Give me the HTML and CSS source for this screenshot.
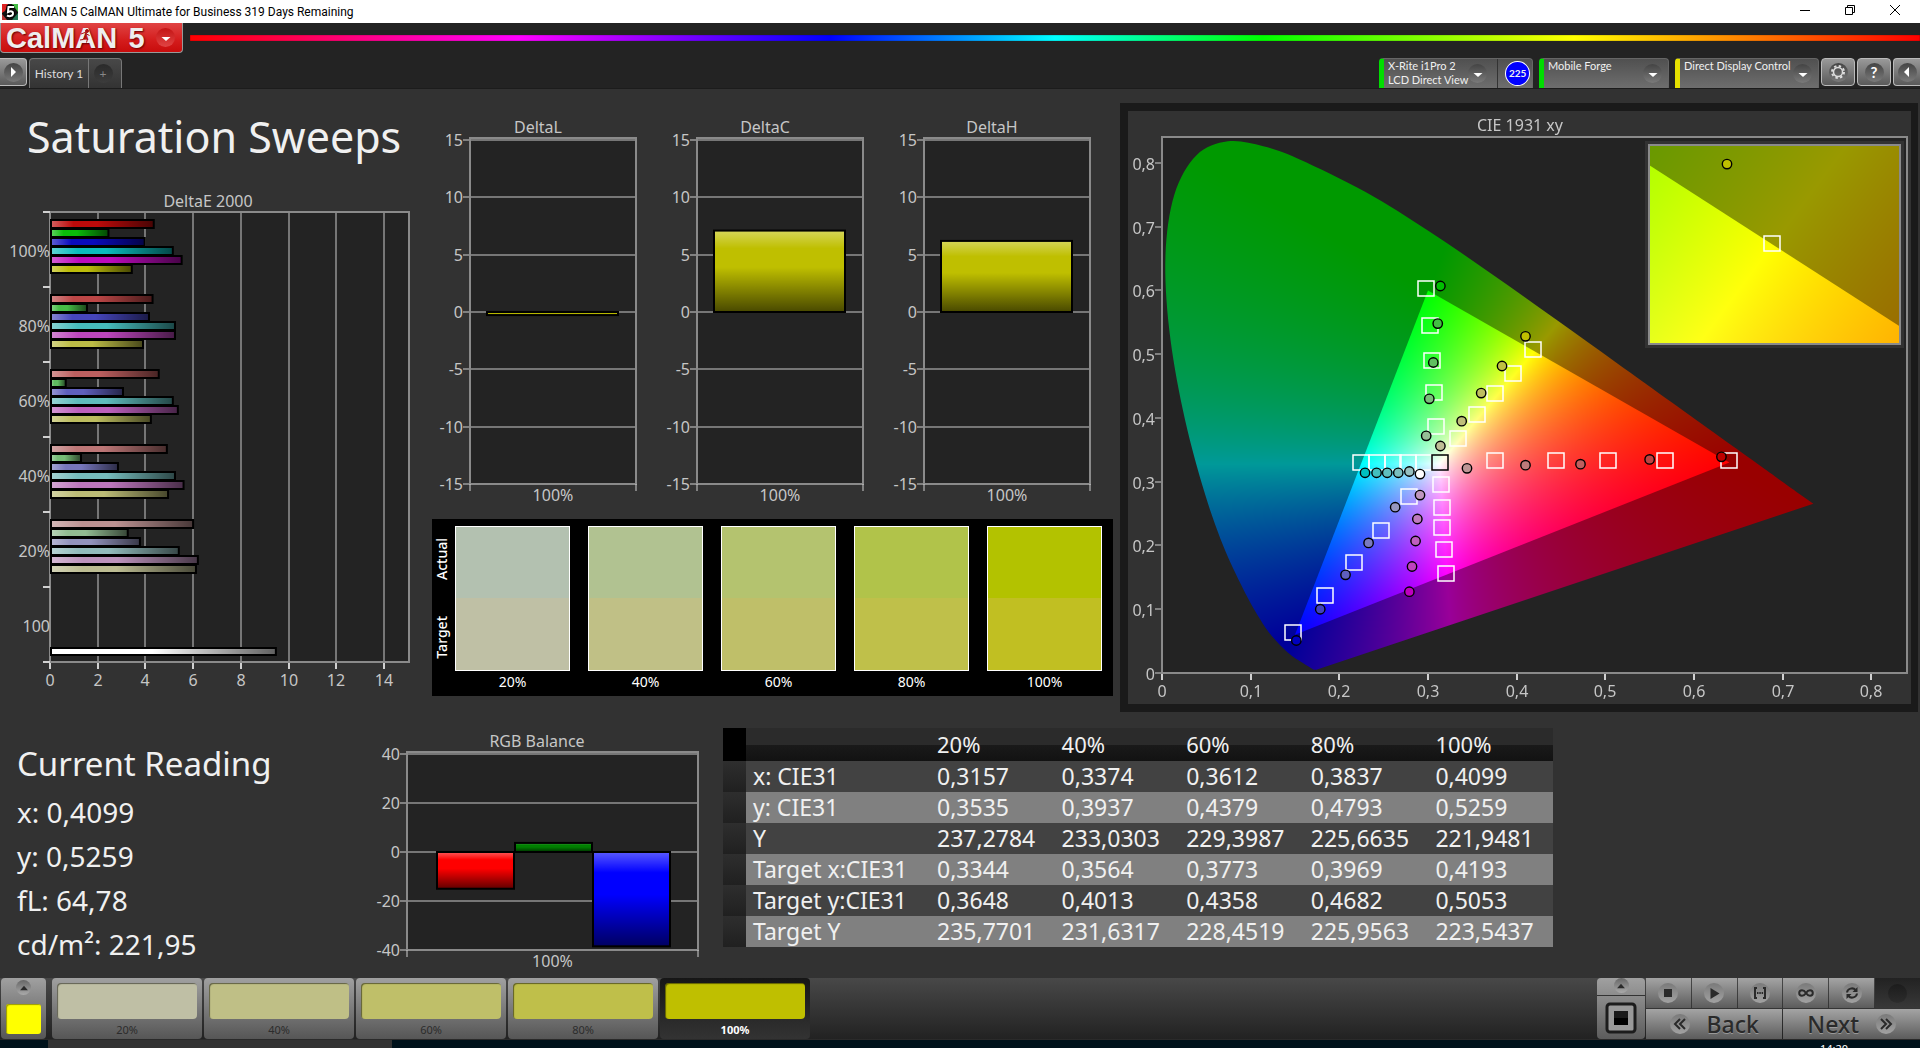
FILE: index.html
```
<!DOCTYPE html>
<html lang="en">
<head>
<meta charset="utf-8">
<title>CalMAN 5 CalMAN Ultimate for Business 319 Days Remaining</title>
<link rel="stylesheet" href="styles.css">
</head>
<body>

<div class="titlebar">
  <svg class="app-icon" viewBox="0 0 16 16" aria-hidden="true">
    <rect width="16" height="16" fill="#111"/>
    <path d="M0 0h6L3 7 0 9z" fill="#d22"/><path d="M10 0h6v8z" fill="#4b4"/><path d="M0 10l5 6H0z" fill="#b33"/><path d="M16 9v7h-6z" fill="#275"/>
    <path d="M12 3H6.500L6 8c3-1.500 5.500-.5 5 2s-4 2.500-6 1.500" fill="none" stroke="#000" stroke-width="4"/>
    <path d="M12 3H6.500L6 8c3-1.500 5.500-.5 5 2s-4 2.500-6 1.500" fill="none" stroke="#fff" stroke-width="2"/>
  </svg>
  <span class="caption">CalMAN 5 CalMAN Ultimate for Business 319 Days Remaining</span>
  <button class="win-btn" aria-label="Minimize"><svg viewBox="0 0 12 12"><path d="M1 6.500h10"/></svg></button>
  <button class="win-btn" aria-label="Restore"><svg viewBox="0 0 12 12"><path d="M1.500 3.500h7v7h-7zM3.500 3V1.500h7v7H9"/></svg></button>
  <button class="win-btn" aria-label="Close"><svg viewBox="0 0 12 12"><path d="M1 1l10 10M11 1L1 11"/></svg></button>
</div>

<header class="brandbar">
  <button class="logo" aria-label="CalMAN 5 menu">
    <span class="logo-name">CalM<span class="logo-a">A<svg viewBox="0 0 14 14"><circle cx="9" cy="2" r="1.500"/><path d="M3 5l4-1.500 1.500 1L7 8l2.500 2-1 3.500M7 8l-2 2.500-3 .5M8.500 5l3 1.500"/></svg></span>N</span>
    <span class="logo-five">5</span>
    <span class="knob red"><svg viewBox="0 0 18 18"><path d="M4.500 8h9l-4.500 4z"/></svg></span>
  </button>
  <div class="rainbow"></div>
</header>

<nav class="tabbar">
  <button class="gray-btn side-btn" aria-label="Show panel"><span class="knob"><svg viewBox="0 0 18 18"><path d="M7 4v10l5-5z"/></svg></span></button>
  <div class="tabs">
    <button class="tab">History 1</button>
    <button class="tab add" aria-label="Add tab"><span class="knob dark">+</span></button>
  </div>
  <div class="devices">
    <div class="device meter green">
      <button class="device-name"><span>X-Rite i1Pro 2<br>LCD Direct View</span><span class="knob"><svg viewBox="0 0 18 18"><path d="M4.500 8h9l-4.500 4z"/></svg></span></button>
      <span class="meter-count">225</span>
    </div>
    <div class="device source green">
      <button class="device-name"><span>Mobile Forge</span><span class="knob"><svg viewBox="0 0 18 18"><path d="M4.500 8h9l-4.500 4z"/></svg></span></button>
    </div>
    <div class="device display yellow">
      <button class="device-name"><span>Direct Display Control</span><span class="knob"><svg viewBox="0 0 18 18"><path d="M4.500 8h9l-4.500 4z"/></svg></span></button>
    </div>
  </div>
  <button class="gray-btn" aria-label="Settings"><span class="knob"><svg viewBox="0 0 18 18"><circle cx="9" cy="9" r="4.500" fill="none" stroke="#ddd" stroke-width="1.500"/><circle cx="9" cy="9" r="6" fill="none" stroke="#ddd" stroke-width="2" stroke-dasharray="2.400 2.312"/></svg></span></button>
  <button class="gray-btn" aria-label="Help"><span class="knob help">?</span></button>
  <button class="gray-btn end-btn" aria-label="Hide panel"><span class="knob"><svg viewBox="0 0 18 18"><path d="M11 4v10L6 9z"/></svg></span></button>
</nav>

<main class="workspace">
  <div class="upper">
    <section class="sweep">
      <h1>Saturation Sweeps</h1>
      <svg id="deltaE" class="chart" viewBox="0 0 432 520"></svg>
    </section>

    <section class="deltas">
      <div class="delta-charts">
        <svg id="deltaL" class="chart" viewBox="0 0 227 400"></svg>
        <svg id="deltaC" class="chart" viewBox="0 0 227 400"></svg>
        <svg id="deltaH" class="chart" viewBox="0 0 227 400"></svg>
      </div>
      <div class="compare">
        <div class="compare-side"><span>Actual</span><span>Target</span></div>
        <figure><div class="patch p20"></div><figcaption>20%</figcaption></figure>
        <figure><div class="patch p40"></div><figcaption>40%</figcaption></figure>
        <figure><div class="patch p60"></div><figcaption>60%</figcaption></figure>
        <figure><div class="patch p80"></div><figcaption>80%</figcaption></figure>
        <figure><div class="patch p100"></div><figcaption>100%</figcaption></figure>
      </div>
    </section>

    <section class="cie">
      <canvas id="cieFill" width="783" height="593"></canvas>
      <svg id="ciePlot" class="chart" viewBox="0 0 783 593"></svg>
    </section>
  </div>

  <div class="lower">
    <section class="reading">
      <h2>Current Reading</h2>
      <p>x: 0,4099</p>
      <p>y: 0,5259</p>
      <p>fL: 64,78</p>
      <p>cd/m²: 221,95</p>
    </section>

    <section class="balance">
      <svg id="rgb" class="chart" viewBox="0 0 340 245"></svg>
    </section>

    <table class="data">
      <thead>
        <tr><th class="grip"></th><th class="name"></th><th>20%</th><th>40%</th><th>60%</th><th>80%</th><th>100%</th></tr>
      </thead>
      <tbody>
        <tr><td class="grip"></td><th>x: CIE31</th><td>0,3157</td><td>0,3374</td><td>0,3612</td><td>0,3837</td><td>0,4099</td></tr>
        <tr><td class="grip"></td><th>y: CIE31</th><td>0,3535</td><td>0,3937</td><td>0,4379</td><td>0,4793</td><td>0,5259</td></tr>
        <tr><td class="grip"></td><th>Y</th><td>237,2784</td><td>233,0303</td><td>229,3987</td><td>225,6635</td><td>221,9481</td></tr>
        <tr><td class="grip"></td><th>Target x:CIE31</th><td>0,3344</td><td>0,3564</td><td>0,3773</td><td>0,3969</td><td>0,4193</td></tr>
        <tr><td class="grip"></td><th>Target y:CIE31</th><td>0,3648</td><td>0,4013</td><td>0,4358</td><td>0,4682</td><td>0,5053</td></tr>
        <tr><td class="grip"></td><th>Target Y</th><td>235,7701</td><td>231,6317</td><td>228,4519</td><td>225,9563</td><td>223,5437</td></tr>
      </tbody>
    </table>
  </div>
</main>

<footer class="controls">
  <button class="current" aria-label="Current color">
    <span class="knob small"><svg viewBox="0 0 18 18"><path d="M4 12h10L9 6z"/></svg></span>
    <span class="current-color"></span>
  </button>
  <div class="levels">
    <button class="level"><span class="chip c20"></span>20%</button>
    <button class="level"><span class="chip c40"></span>40%</button>
    <button class="level"><span class="chip c60"></span>60%</button>
    <button class="level"><span class="chip c80"></span>80%</button>
    <button class="level active"><span class="chip c100"></span>100%</button>
  </div>
  <div class="pattern">
    <button class="pattern-up" aria-label="Expand"><span class="knob small"><svg viewBox="0 0 18 18"><path d="M4 12h10L9 6z"/></svg></span></button>
    <button class="pattern-window" aria-label="Window pattern"><svg viewBox="0 0 32 32"><rect x="2" y="2" width="28" height="28" rx="3" fill="#999" stroke="#1c1c1c" stroke-width="3"/><rect x="9" y="9" width="14" height="7" fill="#1a1a1a"/><rect x="9" y="16" width="14" height="7" fill="#000"/></svg></button>
  </div>
  <div class="transport">
    <button class="key" aria-label="Stop"><span class="knob light"><svg viewBox="0 0 20 20"><path d="M6 6h8v8H6z"/></svg></span></button>
    <button class="key" aria-label="Read"><span class="knob light"><svg viewBox="0 0 20 20"><path d="M6.500 5v11l9-5.500z"/></svg></span></button>
    <button class="key" aria-label="Read series"><span class="knob light"><svg viewBox="0 0 20 20"><path class="line" d="M7 5H5v10h2M13 5h2v10h-2"/><path d="M7 9h1.500v2H7zM9.300 9h1.500v2H9.300zM11.600 9h1.500v2h-1.500z"/></svg></span></button>
    <button class="key" aria-label="Read continuously"><span class="knob light"><svg viewBox="0 0 20 20"><path class="line" d="M10 10c-1.500-2.300-2.500-2.800-4-2.800a2.800 2.800 0 0 0 0 5.600c1.500 0 2.500-.5 4-2.800s2.500-2.800 4-2.800a2.800 2.800 0 0 1 0 5.600c-1.500 0-2.500-.5-4-2.800z"/></svg></span></button>
    <button class="key" aria-label="Refresh"><span class="knob light"><svg viewBox="0 0 20 20"><path class="line" d="M5 9.500c.5-4 6-5.500 8.500-2.500M15 10.500c-.5 4-6 5.500-8.500 2.500"/><path d="M15.500 4v5h-5zM4.500 16v-5h5z"/></svg></span></button>
    <button class="key off" aria-label="Unavailable"><span class="knob dark"></span></button>
    <button class="key wide"><span class="knob light"><svg viewBox="0 0 20 20"><path class="line" d="M10 5l-5 5 5 5M15 5l-5 5 5 5"/></svg></span>Back</button>
    <button class="key wide">Next<span class="knob light"><svg viewBox="0 0 20 20"><path class="line" d="M5 5l5 5-5 5M10 5l5 5-5 5"/></svg></span></button>
  </div>
</footer>

<div class="taskbar"><div class="task"></div><span class="clock">14:20</span></div>

<script src="charts.js"></script>
</body>
</html>
```
FILE: styles.css
```
* {
  box-sizing: border-box;
}

body {
  margin: 0;
  min-height: 100vh;
  display: flex;
  flex-direction: column;
  background: #232323;
  color: #f0f0f0;
  font-family: "Noto Sans", "Open Sans", sans-serif;
  font-size: 14px;
  overflow-x: hidden;
}

button {
  border: 0;
  padding: 0;
  margin: 0;
  background: none;
  color: inherit;
  font: inherit;
  cursor: pointer;
}

h1, h2, p, figure {
  margin: 0;
  font-weight: normal;
}

/* window title */
.titlebar {
  height: 23px;
  display: flex;
  align-items: center;
  background: #fff;
  color: #000;
  font-family: Roboto, "Noto Sans", sans-serif;
  font-size: 12px;
}

.app-icon {
  width: 16px;
  height: 16px;
  margin: 0 5px 0 2px;
}

.caption {
  flex: 1;
}

.win-btn {
  width: 45px;
  height: 20px;
}

.win-btn:last-child {
  margin-right: 3px;
}

.win-btn svg {
  width: 12px;
  height: 12px;
  fill: none;
  stroke: #000;
}

/* logo and rainbow */
.brandbar {
  height: 35px;
  display: flex;
  gap: 7px;
}

.logo {
  width: 183px;
  height: 30px;
  padding: 0 7px 0 5px;
  display: flex;
  align-items: center;
  justify-content: space-between;
  border: 1px solid #999;
  border-top: 0;
  border-radius: 0 0 4px 4px;
  background: linear-gradient(#e04444, #d41c1c 60%, #c80c0c);
  color: #eee;
  font-family: "Liberation Sans", sans-serif;
  font-weight: bold;
  font-size: 29px;
  line-height: 28px;
  text-shadow: 1px 1px 2px #600;
}

.logo-a {
  position: relative;
}

.logo-a svg {
  position: absolute;
  left: 3px;
  top: 7px;
  width: 14px;
  height: 14px;
  fill: #a11;
  stroke: #a11;
  stroke-width: 1;
}

.logo-a path {
  fill: none;
}

.rainbow {
  flex: 1;
  height: 6px;
  margin-top: 12px;
  background: linear-gradient(90deg, #f00, #f0f 19%, #00f 37%, #0ff 50%, #0f0 62%, #ff0 80%, #f00);
  box-shadow: inset 0 0 1px #000;
}

.knob {
  flex: none;
  width: 19px;
  height: 19px;
  display: inline-flex;
  align-items: center;
  justify-content: center;
  border-radius: 50%;
  background: linear-gradient(#444, #7a7a7a);
  color: #fff;
}

.knob svg {
  width: 18px;
  height: 18px;
  fill: #fff;
}

.knob.red {
  background: linear-gradient(#c41414, #e04444);
}

.knob.dark {
  background: linear-gradient(#2a2a2a, #3c3c3c);
  color: #888;
}

.knob.help {
  font-weight: bold;
  font-size: 15px;
}

.knob.small {
  width: 15px;
  height: 15px;
  background: linear-gradient(#666, #aaa);
}

.knob.small svg {
  width: 14px;
  height: 14px;
  fill: #2a2a2a;
}

.knob.light {
  width: 20px;
  height: 20px;
  background: linear-gradient(#7a7a7a, #a2a2a2);
}

.knob.light svg {
  width: 20px;
  height: 20px;
  fill: #2a2a2a;
}

.knob.light .line {
  fill: none;
  stroke: #2a2a2a;
  stroke-width: 2;
}

/* tabs and devices */
.tabbar {
  height: 31px;
  display: flex;
  align-items: flex-start;
  gap: 2px;
  border-bottom: 1px solid #1c1c1c;
  font-family: Lato, "Noto Sans", sans-serif;
}

.gray-btn {
  width: 34px;
  height: 28px;
  display: flex;
  align-items: center;
  justify-content: center;
  border: 1px solid #bbb;
  border-radius: 4px;
  background: linear-gradient(#999, #5a5a5a);
}

.side-btn {
  width: 27px;
  border-left: 0;
  border-radius: 0 4px 4px 0;
}

.end-btn {
  width: 27px;
  border-right: 0;
  border-radius: 4px 0 0 4px;
}

.tabs {
  display: flex;
  height: 30px;
  border: 1px solid #777;
  border-bottom: 0;
  border-radius: 4px 4px 0 0;
  background: linear-gradient(#484848, #333);
}

.tab {
  width: 58px;
  color: #ddd;
  font-size: 12px;
}

.tab.add {
  width: 33px;
  padding-right: 4px;
  border-left: 1px solid #777;
}

.devices {
  flex: 1;
  display: flex;
  justify-content: flex-end;
  gap: 6px;
}

.device {
  height: 30px;
  display: flex;
  align-items: center;
  border: 1px solid #666;
  border-bottom: 0;
  border-left: 5px solid #0d0;
  border-radius: 4px 4px 0 0;
  background: linear-gradient(#505050, #6e6e6e);
  font-size: 11px;
  line-height: 14px;
  white-space: nowrap;
}

.device.yellow {
  border-left-color: #e6e000;
}

.meter {
  width: 154px;
}

.source {
  width: 130px;
}

.display {
  width: 144px;
}

.device-name {
  flex: 1;
  height: 29px;
  padding: 0 6px 0 4px;
  display: flex;
  text-align: left;
}

.device-name .knob {
  margin: 5px 0 0 auto;
}

.meter .device-name {
  padding-right: 10px;
  border-right: 1px solid #333;
}

.meter-count {
  width: 25px;
  height: 25px;
  margin: 0 2px 0 7px;
  border: 1px solid #fff;
  border-radius: 50%;
  background: #00f;
  font-size: 10px;
  font-weight: bold;
  line-height: 22px;
  text-align: center;
}

/* workspace */
.workspace {
  flex: 1;
  background: #323232;
}

.upper {
  display: grid;
  grid-template-columns: 432fr 688fr 800fr;
}

.chart {
  display: block;
  width: 100%;
  height: auto;
  overflow: visible;
  font-size: 16px;
  fill: #c6c6c6;
}

.sweep h1 {
  padding: 18px 0 0 27px;
  font-size: 43px;
  line-height: 60px;
  height: 91px;
  white-space: nowrap;
}

.deltas {
  padding-top: 21px;
}

.delta-charts {
  display: grid;
  grid-template-columns: repeat(3, 227fr) 7fr;
}

.compare {
  display: flex;
  gap: 18px;
  margin: 9px 7px 0 0;
  padding: 7px 11px 5px 0;
  background: #000;
  color: #fff;
  font-weight: 500;
}

.compare-side {
  width: 23px;
  height: 145px;
  margin-right: -18px;
  padding: 12px 3px 12px 0;
  display: flex;
  flex-direction: column;
  justify-content: space-between;
  align-items: center;
}

.compare-side span {
  writing-mode: vertical-rl;
  transform: rotate(180deg);
  line-height: 20px;
}

.compare figure {
  flex: 1;
  text-align: center;
}

.patch {
  height: 145px;
  border: 1px solid #fff;
}

.compare figcaption {
  line-height: 22px;
  height: 20px;
}

.p20 { background: linear-gradient(#b3c1b0 50%, #bfc0a5 50%); }
.p40 { background: linear-gradient(#b1c291 50%, #c0c086 50%); }
.p60 { background: linear-gradient(#b4c36f 50%, #bfbf69 50%); }
.p80 { background: linear-gradient(#b1c34a 50%, #bfc04a 50%); }
.p100 { background: linear-gradient(#b3c200 50%, #c1bf22 50%); }

.cie {
  display: grid;
  margin: 14px 2px 0 0;
  border: 8px solid #1a1a1a;
  border-right-width: 7px;
}

.cie > * {
  grid-area: 1 / 1;
  width: 100%;
  height: auto;
}

.lower {
  display: grid;
  grid-template-columns: 370fr 340fr 843fr 367fr;
  padding-top: 16px;
}

.reading {
  padding: 14px 0 0 17px;
}

.reading h2 {
  margin-bottom: 4px;
  font-size: 33px;
  line-height: 44px;
  white-space: nowrap;
}

.reading p {
  font-size: 28px;
  line-height: 44px;
}

.balance {
  padding-top: 3px;
}

.data {
  margin-left: 13px;
  border-collapse: collapse;
  table-layout: fixed;
  align-self: start;
  font-size: 23px;
  line-height: 28px;
}

.data th,
.data td {
  height: 31px;
  padding: 0 0 2px 7px;
  font-weight: normal;
  text-align: left;
  white-space: nowrap;
}

.data thead th {
  height: 33px;
  background: linear-gradient(#2b2b2b 50%, #1a1a1a 50%, #121212);
  font-size: 22px;
}

.data .grip {
  width: 23px;
  background: linear-gradient(#2e2e2e, #202020);
}

.data thead .grip {
  background: #000;
}

.data .name {
  width: 184px;
}

.data tbody tr {
  background: #424242;
}

.data tbody tr:nth-child(even) {
  background: #808080;
}

/* bottom controls */
.controls {
  height: 62px;
  display: flex;
  border-bottom: 1px solid #2a2a2a;
  background: linear-gradient(#484848, #222);
}

.current,
.level {
  height: 61px;
  display: flex;
  flex-direction: column;
  align-items: center;
  border-radius: 4px;
  background: linear-gradient(#a0a0a0, #565656);
}

.current {
  width: 45px;
  margin: 0 6px 0 1px;
  padding-top: 2px;
  gap: 9px;
}

.current-color {
  width: 35px;
  height: 30px;
  border-radius: 3px;
  background: #ff0;
  box-shadow: inset 1px 1px 1px #990;
}

.levels {
  flex: 1;
  display: flex;
  gap: 2px;
}

.level {
  width: 150px;
  padding: 5px;
  color: #2c2c2c;
  font-size: 11px;
  line-height: 22px;
}

.level.active {
  background: linear-gradient(#161616, #333);
  color: #fff;
  font-weight: bold;
}

.chip {
  width: 140px;
  height: 36px;
  flex: none;
  border-radius: 4px;
  box-shadow: inset 1px 1px 1px rgba(0, 0, 0, 0.5);
}

.c20 { background: #bfbfa5; }
.c40 { background: #bfbf86; }
.c60 { background: #bfbf69; }
.c80 { background: #bfbf4a; }
.c100 { background: #bfbf00; }

.pattern {
  width: 48px;
  height: 61px;
  margin-right: 1px;
  display: flex;
  flex-direction: column;
  border-radius: 4px;
  background: linear-gradient(#a0a0a0, #5c5c5c);
}

.pattern-up {
  height: 18px;
  border-bottom: 1px solid #333;
  display: flex;
  justify-content: center;
}

.pattern-window {
  flex: 1;
  display: flex;
  align-items: center;
  justify-content: center;
}

.pattern-window svg {
  width: 32px;
  height: 32px;
}

.transport {
  width: 274px;
  height: 61px;
  display: grid;
  grid-template-columns: repeat(6, 1fr);
  gap: 1px;
}

.key {
  height: 30px;
  display: flex;
  align-items: center;
  justify-content: center;
  background: linear-gradient(#a4a4a4, #5c5c5c);
  color: #2a2a2a;
}

.key.off {
  background: linear-gradient(#222, #383838);
}

.key.off .knob {
  background: linear-gradient(#1c1c1c, #2c2c2c);
}

.key.wide {
  grid-column: span 3;
  gap: 17px;
  font-size: 23px;
  font-weight: 500;
  line-height: 28px;
  text-shadow: 0 1px 0 #999;
}

.taskbar {
  height: 8px;
  overflow: hidden;
  display: flex;
  justify-content: space-between;
  padding: 0 72px 0 48px;
  background: #00121b;
}

.task {
  width: 344px;
  background: #333;
}

.clock {
  padding-top: 3px;
  font-size: 11px;
  line-height: 12px;
  color: #fff;
}
```
FILE: charts.js
```
var FRAME = '#8a8a8a';
var GRID = '#767676';
var TICK = '#d0d0d0';

// shared bar shading, light at the start and dark at the end
var SHADE = '<stop offset="0" stop-color="#fff" stop-opacity=".35"/>' +
  '<stop offset=".22" stop-color="#fff" stop-opacity="0"/>' +
  '<stop offset=".45" stop-color="#000" stop-opacity="0"/>' +
  '<stop offset="1" stop-color="#000" stop-opacity=".62"/>';

function rect(x, y, w, h, attrs) {
  return '<rect x="' + x + '" y="' + y + '" width="' + w + '" height="' + h + '" ' + attrs + '/>';
}

function line(x1, y1, x2, y2, color, width) {
  return '<line x1="' + x1 + '" y1="' + y1 + '" x2="' + x2 + '" y2="' + y2 + '" stroke="' + color + '" stroke-width="' + width + '"/>';
}

function text(x, y, anchor, value) {
  return '<text x="' + x + '" y="' + y + '" text-anchor="' + anchor + '">' + value + '</text>';
}

function bar(x, y, w, h, color, shade) {
  return rect(x, y, w, h, 'fill="' + color + '"') +
    rect(x, y, w, h, 'fill="url(#' + shade + ')" stroke="#000" stroke-width="2"');
}

// vertical bar chart around a zero line
function columnChart(id, o) {
  var unit = (o.h - 2) / (o.max * 2);
  var zero = o.y + 2 + o.max * unit;
  var out = '<defs><linearGradient id="' + id + 'V" x2="0" y2="1">' + SHADE + '</linearGradient></defs>';
  out += rect(o.x, o.y, o.w, o.h, 'fill="#232323"');
  for (var v = -o.max; v <= o.max; v += o.step) {
    var y = Math.round(zero - v * unit);
    out += line(o.x, y, o.x + o.w, y, GRID, 2);
    out += line(o.x - 7, y, o.x, y, TICK, 1);
    out += text(o.x - 7, y + 6, 'end', v);
  }
  out += rect(o.x, o.y, o.w, o.h, 'fill="none" stroke="' + FRAME + '" stroke-width="2"');
  out += line(o.x, o.y + o.h, o.x, o.y + o.h + 7, TICK, 1) + line(o.x + o.w, o.y + o.h, o.x + o.w, o.y + o.h + 7, TICK, 1);
  o.bars.forEach(function (b) {
    var h = Math.abs(b.value) * unit;
    out += bar(b.x, b.value > 0 ? zero - h : zero, b.w, h, b.color, id + 'V');
  });
  out += text(o.titleX, o.y - 5, 'middle', o.title);
  out += text(o.x + o.w / 2, o.y + o.h + 17, 'middle', '100%');
  document.getElementById(id).innerHTML = out;
}

function deltaChart(id, title, value) {
  columnChart(id, {
    title: title, titleX: 106, x: 38, y: 28, w: 166, h: 346, max: 15, step: 5,
    bars: [{ x: 55, w: 131, value: value, color: '#bfbf00' }]
  });
}

deltaChart('deltaL', 'DeltaL', -0.27);
deltaChart('deltaC', 'DeltaC', 7.1);
deltaChart('deltaH', 'DeltaH', 6.2);

columnChart('rgb', {
  title: 'RGB Balance', titleX: 167, x: 37, y: 21, w: 291, h: 198, max: 40, step: 20,
  bars: [
    { x: 67, w: 77, value: -15, color: '#f00' },
    { x: 145, w: 77, value: 3.7, color: '#007f00' },
    { x: 223, w: 77, value: -38.5, color: '#00f' }
  ]
});

// DeltaE 2000, six bars for each saturation level: R G B C M Y
(function () {
  var x0 = 50, top = 32, bottom = 482, right = 409, unit = 23.85;
  var low = [10, 70, 95, 118, 146];
  var levels = [
    [4.35, 2.45, 3.97, 5.15, 5.52, 3.43],
    [4.3, 1.55, 4.15, 5.24, 5.24, 3.9],
    [4.56, 0.66, 3.06, 5.15, 5.36, 4.23],
    [4.9, 1.3, 2.85, 5.24, 5.6, 4.95],
    [6, 3.26, 3.77, 5.4, 6.2, 6.12]
  ];
  var mask = [[1, 0, 0], [0, 1, 0], [0, 0, 1], [0, 1, 1], [1, 0, 1], [1, 1, 0]];
  var labels = ['100%', '80%', '60%', '40%', '20%', '100'];
  var out = '<defs><linearGradient id="deH">' + SHADE + '</linearGradient></defs>';
  out += rect(x0, top, right - x0, bottom - top, 'fill="#232323"');
  for (var v = 0; v <= 14; v += 2) {
    var x = Math.round(x0 + v * unit);
    out += line(x, top, x, bottom, GRID, 2) + line(x, bottom, x, bottom + 7, TICK, 2);
    out += text(x, bottom + 24, 'middle', v);
  }
  out += rect(x0, top, right - x0, bottom - top, 'fill="none" stroke="' + FRAME + '" stroke-width="2"');
  for (var i = 0; i <= 6; i++) {
    var y = Math.round(top + i * 75);
    out += line(x0 - 7, y, x0, y, TICK, 2);
    if (i < 6) out += text(x0, y + 45, 'end', labels[i]);
  }
  levels.forEach(function (values, i) {
    values.forEach(function (value, j) {
      var color = 'rgb(' + mask[j].map(function (m) { return m ? 188 : low[i]; }) + ')';
      out += bar(x0 + 1, Math.round(top + 8 + i * 75 + j * 9), value * unit - 1, 8, color, 'deH');
    });
  });
  out += bar(x0 + 1, 468, 9.47 * unit - 1, 7, '#fff', 'deH');
  out += text(208, 27, 'middle', 'DeltaE 2000');
  document.getElementById('deltaE').innerHTML = out;
})();

// CIE 1931 chromaticity diagram
var cie = { x: 34, y: 26, w: 745, h: 536, sx: 886.6, sy: 637.6 };
var inset = { x: 521, y: 34, w: 251, h: 199, cx: 644, cy: 133, sx: 4787, sy: 3880 };
var locus = [
  [.1741, .005], [.1714, .0051], [.1689, .0069], [.1644, .0109], [.1566, .0177], [.144, .0297],
  [.1241, .0578], [.1096, .0868], [.0913, .1327], [.0687, .2007], [.0454, .295], [.0235, .4127],
  [.0082, .5384], [.0039, .6548], [.0139, .7502], [.0389, .812], [.0743, .8338], [.1142, .8262],
  [.1547, .8059], [.2296, .7543], [.3016, .6923], [.3731, .6245], [.4441, .5547], [.5125, .4866],
  [.5752, .4242], [.627, .3725], [.6658, .334], [.6915, .3083], [.719, .2809], [.7347, .2653]
];
var gamut = [[.64, .33], [.3, .6], [.15, .06]];

function px(x) { return cie.x + x * cie.sx; }
function py(y) { return cie.y + cie.h - y * cie.sy; }
function ix(x) { return inset.cx + (x - .4193) * inset.sx; }
function iy(y) { return inset.cy - (y - .5053) * inset.sy; }

// fills a canvas with the brightest color of each chromaticity
function colorField(w, h, toX, toY, level) {
  var c = document.createElement('canvas');
  c.width = w;
  c.height = h;
  var g = c.getContext('2d');
  var img = g.createImageData(w, h);
  for (var j = 0; j < h; j++) {
    for (var i = 0; i < w; i++) {
      var x = toX(i), y = Math.max(toY(j), .0001), z = 1 - x - y;
      var r = Math.max(0, 3.2406 * x - 1.5372 * y - .4986 * z);
      var gr = Math.max(0, -.9689 * x + 1.8758 * y + .0415 * z);
      var b = Math.max(0, .0557 * x - .204 * y + 1.057 * z);
      var k = 255 * level / Math.max(r, gr, b);
      var p = (j * w + i) * 4;
      img.data[p] = r * k;
      img.data[p + 1] = gr * k;
      img.data[p + 2] = b * k;
      img.data[p + 3] = 255;
    }
  }
  g.putImageData(img, 0, 0);
  return c;
}

function clipTo(g, points, mapX, mapY, smooth) {
  g.beginPath();
  points.forEach(function (p, i) {
    var x = mapX(p[0]), y = mapY(p[1]);
    if (i == 0) g.moveTo(x, y);
    else if (smooth && i < points.length - 1) {
      var a = points[Math.max(i - 2, 0)], b = points[i - 1], d = points[i + 1];
      g.bezierCurveTo(mapX(b[0] + (p[0] - a[0]) / 6), mapY(b[1] + (p[1] - a[1]) / 6),
        mapX(p[0] - (d[0] - b[0]) / 6), mapY(p[1] - (d[1] - b[1]) / 6), x, y);
    } else g.lineTo(x, y);
  });
  g.closePath();
  g.clip();
}

(function () {
  var canvas = document.getElementById('cieFill');
  var g = canvas.getContext('2d');
  var W = canvas.width, H = canvas.height;
  g.fillStyle = '#232323';
  g.fillRect(cie.x, cie.y, cie.w, cie.h);

  function toX(i) { return (i - cie.x) / cie.sx; }
  function toY(j) { return (cie.y + cie.h - j) / cie.sy; }
  g.save();
  clipTo(g, locus, px, py, true);
  g.drawImage(colorField(W, H, toX, toY, .6), 0, 0);
  clipTo(g, gamut, px, py, false);
  g.drawImage(colorField(W, H, toX, toY, 1), 0, 0);
  g.restore();

  function insetX(i) { return .4193 + (i + inset.x - inset.cx) / inset.sx; }
  function insetY(j) { return .5053 - (j + inset.y - inset.cy) / inset.sy; }
  g.fillStyle = '#323232';
  g.fillRect(inset.x - 4, inset.y - 4, inset.w + 8, inset.h + 8);
  g.drawImage(colorField(inset.w, inset.h, insetX, insetY, .6), inset.x, inset.y);
  g.save();
  g.beginPath();
  g.rect(inset.x, inset.y, inset.w, inset.h);
  g.clip();
  clipTo(g, gamut, ix, iy, false);
  g.drawImage(colorField(inset.w, inset.h, insetX, insetY, 1), inset.x, inset.y);
  g.restore();
})();

// targets and readings, from 20% to 100% saturation
var targets = [
  [.309, .386], [.307, .439], [.304, .49], [.302, .544], [.298, .602],
  [.295, .33], [.277, .33], [.26, .33], [.242, .33], [.224, .33],
  [.334, .367], [.355, .405], [.376, .437], [.396, .469], [.419, .507],
  [.376, .333], [.444, .333], [.503, .333], [.567, .333], [.64, .333],
  [.315, .295], [.316, .258], [.316, .227], [.318, .193], [.32, .155],
  [.279, .276], [.247, .223], [.216, .172], [.184, .121], [.148, .063]
];
var readings = {
  '010': [[.298, .372], [.3015, .43], [.306, .487], [.311, .548], [.314, .607]],
  '110': [[.314, .356], [.338, .395], [.36, .439], [.3835, .4815], [.41, .528]],
  '100': [[.344, .321], [.41, .326], [.472, .3275], [.55, .335], [.631, .339]],
  '011': [[.279, .316], [.2665, .314], [.254, .314], [.242, .314], [.229, .314]],
  '101': [[.291, .279], [.288, .2415], [.286, .207], [.282, .167], [.279, .1275]],
  '001': [[.263, .26], [.233, .204], [.207, .154], [.1785, .1], [.1515, .051]]
};

function square(x, y, color) {
  return rect(Math.round(x) - 8, Math.round(y) - 8, 16, 15, 'fill="none" stroke="' + color + '" stroke-width="1.500"');
}

function dot(x, y, color) {
  return '<circle cx="' + x + '" cy="' + y + '" r="4.700" fill="' + color + '" stroke="#000" stroke-width="1.400"/>';
}

(function () {
  var out = '';
  var right = cie.x + cie.w, bottom = cie.y + cie.h;
  for (var i = 0; i <= 8; i++) {
    var label = i == 0 ? '0' : '0,' + i;
    var x = Math.round(px(i / 10)), y = Math.round(py(i / 10));
    out += line(x, bottom, x, bottom + 7, TICK, 2) + text(x, bottom + 24, 'middle', label);
    out += line(cie.x - 7, y, cie.x, y, TICK, 1) + text(cie.x - 7, y + 7, 'end', label);
  }
  out += rect(cie.x, cie.y, cie.w, cie.h, 'fill="none" stroke="' + FRAME + '" stroke-width="2"');
  out += rect(inset.x, inset.y, inset.w, inset.h, 'fill="none" stroke="' + FRAME + '" stroke-width="2"');
  out += text(392, 20, 'middle', 'CIE 1931 xy');
  targets.forEach(function (t) { out += square(px(t[0]), py(t[1]), '#fff'); });
  out += square(px(.313), py(.33), '#000');
  var low = [150, 122, 95, 66, 0];
  for (var key in readings) {
    readings[key].forEach(function (r, i) {
      var color = 'rgb(' + key.split('').map(function (m) { return m == '1' ? 191 : low[i]; }) + ')';
      out += dot(px(r[0]), py(r[1]), color);
    });
  }
  out += dot(px(.291), py(.312), '#fff');
  out += square(ix(.4193), iy(.5053), '#fff') + dot(ix(.4099), iy(.5259), '#bfbf00');
  document.getElementById('ciePlot').innerHTML = out;
})();
```
